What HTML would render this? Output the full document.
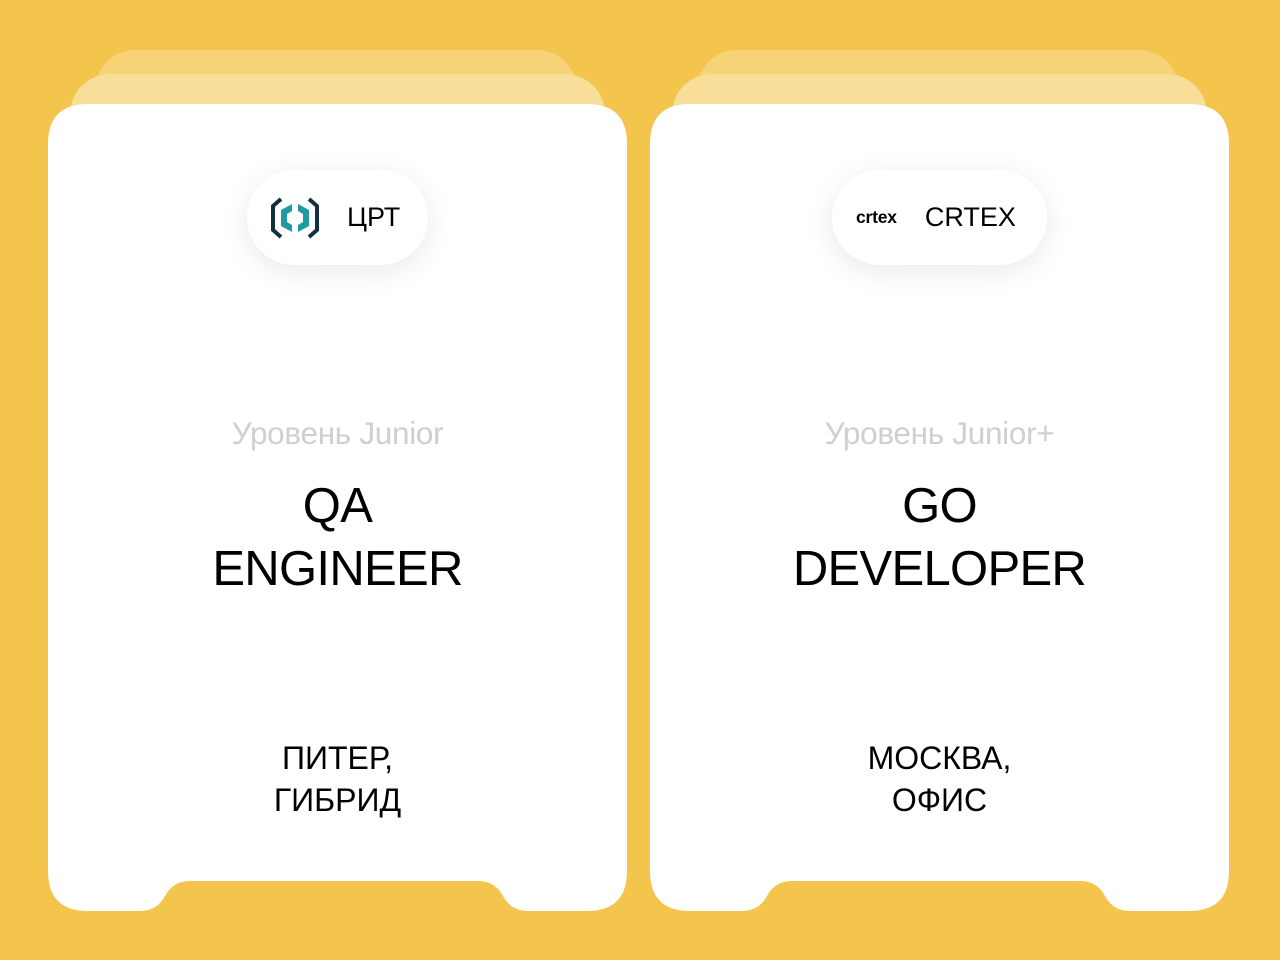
<!DOCTYPE html>
<html><head><meta charset="utf-8"><style>
body{margin:0;width:1280px;height:960px;background:#F4C54D;position:relative;overflow:hidden;font-family:"Liberation Sans",sans-serif}
.l1,.l2{position:absolute;border-radius:40px 40px 0 0}
.l1{background:#F6D376;height:100px}
.l2{background:#F8DE99;height:100px}
svg.card{position:absolute;top:0;left:0}
.pill{position:absolute;top:170px;height:95px;background:#fff;border-radius:48px;box-shadow:0 6px 30px rgba(0,0,0,.09);display:flex;align-items:center}
.t{position:absolute;text-align:center;width:579px}
.lvl{top:415px;font-size:31.5px;color:#cfcfcf;letter-spacing:-0.3px}
.ttl{top:475px;font-size:49px;line-height:63px;color:#000;letter-spacing:-0.7px}
.loc{top:737px;font-size:32px;line-height:42px;color:#000}
</style></head><body>
<div class="l1" style="left:95px;width:482px;top:50px"></div>
<div class="l2" style="left:70px;width:535px;top:74px"></div>
<div class="l1" style="left:697px;width:482px;top:50px"></div>
<div class="l2" style="left:672px;width:535px;top:74px"></div>
<svg class="card" width="1280" height="960">
<defs><path id="c" d="M0 144 Q0 104 40 104 H539 Q579 104 579 144 V871 Q579 911 539 911 H480 Q463 911 455 896 Q447 881 430 881 H142 Q125 881 117 896 Q109 911 92 911 H40 Q0 911 0 871 Z" fill="#fff"/></defs>
<use href="#c" x="48"/><use href="#c" x="650"/>
</svg>
<div class="pill" style="left:247px;width:181px">
<svg style="margin-left:24px" width="48" height="44" viewBox="0 0 48 44"><path d="M10 3 L2 10 V34 L10 41" fill="none" stroke="#12303f" stroke-width="4"/><path d="M38 3 L46 10 V34 L38 41" fill="none" stroke="#12303f" stroke-width="4"/><path d="M21 8 L10 14 V30 L21 36 V29 L16 26 V18 L21 15Z" fill="#1f9aa3"/><path d="M27 8 L38 14 V30 L27 36 V29 L32 26 V18 L27 15Z" fill="#1f9aa3"/></svg>
<span style="margin-left:28px;font-size:27px">ЦРТ</span></div>
<div class="pill" style="left:832px;width:215px">
<span style="margin-left:24px;font-size:17.5px;font-weight:bold;letter-spacing:-0.2px">crtex</span>
<span style="margin-left:28px;font-size:27px">CRTEX</span></div>
<div class="t lvl" style="left:48px">Уровень Junior</div>
<div class="t ttl" style="left:48px">QA<br>ENGINEER</div>
<div class="t loc" style="left:48px">ПИТЕР,<br>ГИБРИД</div>
<div class="t lvl" style="left:650px">Уровень Junior+</div>
<div class="t ttl" style="left:650px">GO<br>DEVELOPER</div>
<div class="t loc" style="left:650px">МОСКВА,<br>ОФИС</div>
</body></html>
